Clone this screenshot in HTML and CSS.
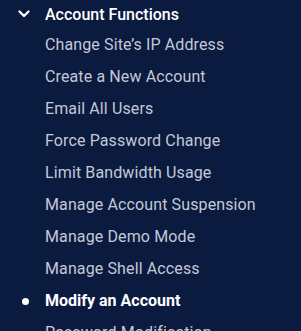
FILE: index.html
```html
<!DOCTYPE html>
<html>
<head>
<meta charset="utf-8">
<link rel="stylesheet" href="styles.css">
</head>
<body>
<nav class="menu">
  <div class="group-head">
    <svg class="chev" width="12" height="8" viewBox="0 0 12 8"><path d="M1.5 1.5 L6 6 L10.5 1.5" fill="none" stroke="#ffffff" stroke-width="2.2" stroke-linecap="round" stroke-linejoin="round"/></svg>
    <span>Account Functions</span>
  </div>
  <ul class="items">
    <li>Change Site’s IP Address</li>
    <li>Create a New Account</li>
    <li>Email All Users</li>
    <li>Force Password Change</li>
    <li>Limit Bandwidth Usage</li>
    <li>Manage Account Suspension</li>
    <li>Manage Demo Mode</li>
    <li>Manage Shell Access</li>
    <li class="active">Modify an Account</li>
    <li>Password Modification</li>
  </ul>
</nav>
</body>
</html>
```
FILE: styles.css
```css
html, body {
  margin: 0;
  padding: 0;
  background: #0b1a3f;
  overflow: hidden;
}
.menu {
  font-family: Roboto, "Liberation Sans", sans-serif;
  padding-top: 0;
}
.group-head {
  display: flex;
  align-items: center;
  height: 28px;
  color: #ffffff;
  font-size: 16px;
  font-weight: 500;
}
.chev {
  margin-left: 18px;
  margin-right: 15px;
}
.items {
  list-style: none;
  margin: 0;
  padding: 1px 0 0;
}
.items li {
  height: 32px;
  line-height: 32px;
  padding-left: 45px;
  font-size: 16px;
  letter-spacing: 0.12px;
  color: #c3c9d6;
  position: relative;
  white-space: nowrap;
}
.items li.active {
  color: #ffffff;
  font-weight: 700;
  letter-spacing: 0;
}
.items li.active::before {
  content: "";
  position: absolute;
  left: 22px;
  top: 13px;
  width: 7px;
  height: 7px;
  border-radius: 50%;
  background: #ffffff;
}
```
